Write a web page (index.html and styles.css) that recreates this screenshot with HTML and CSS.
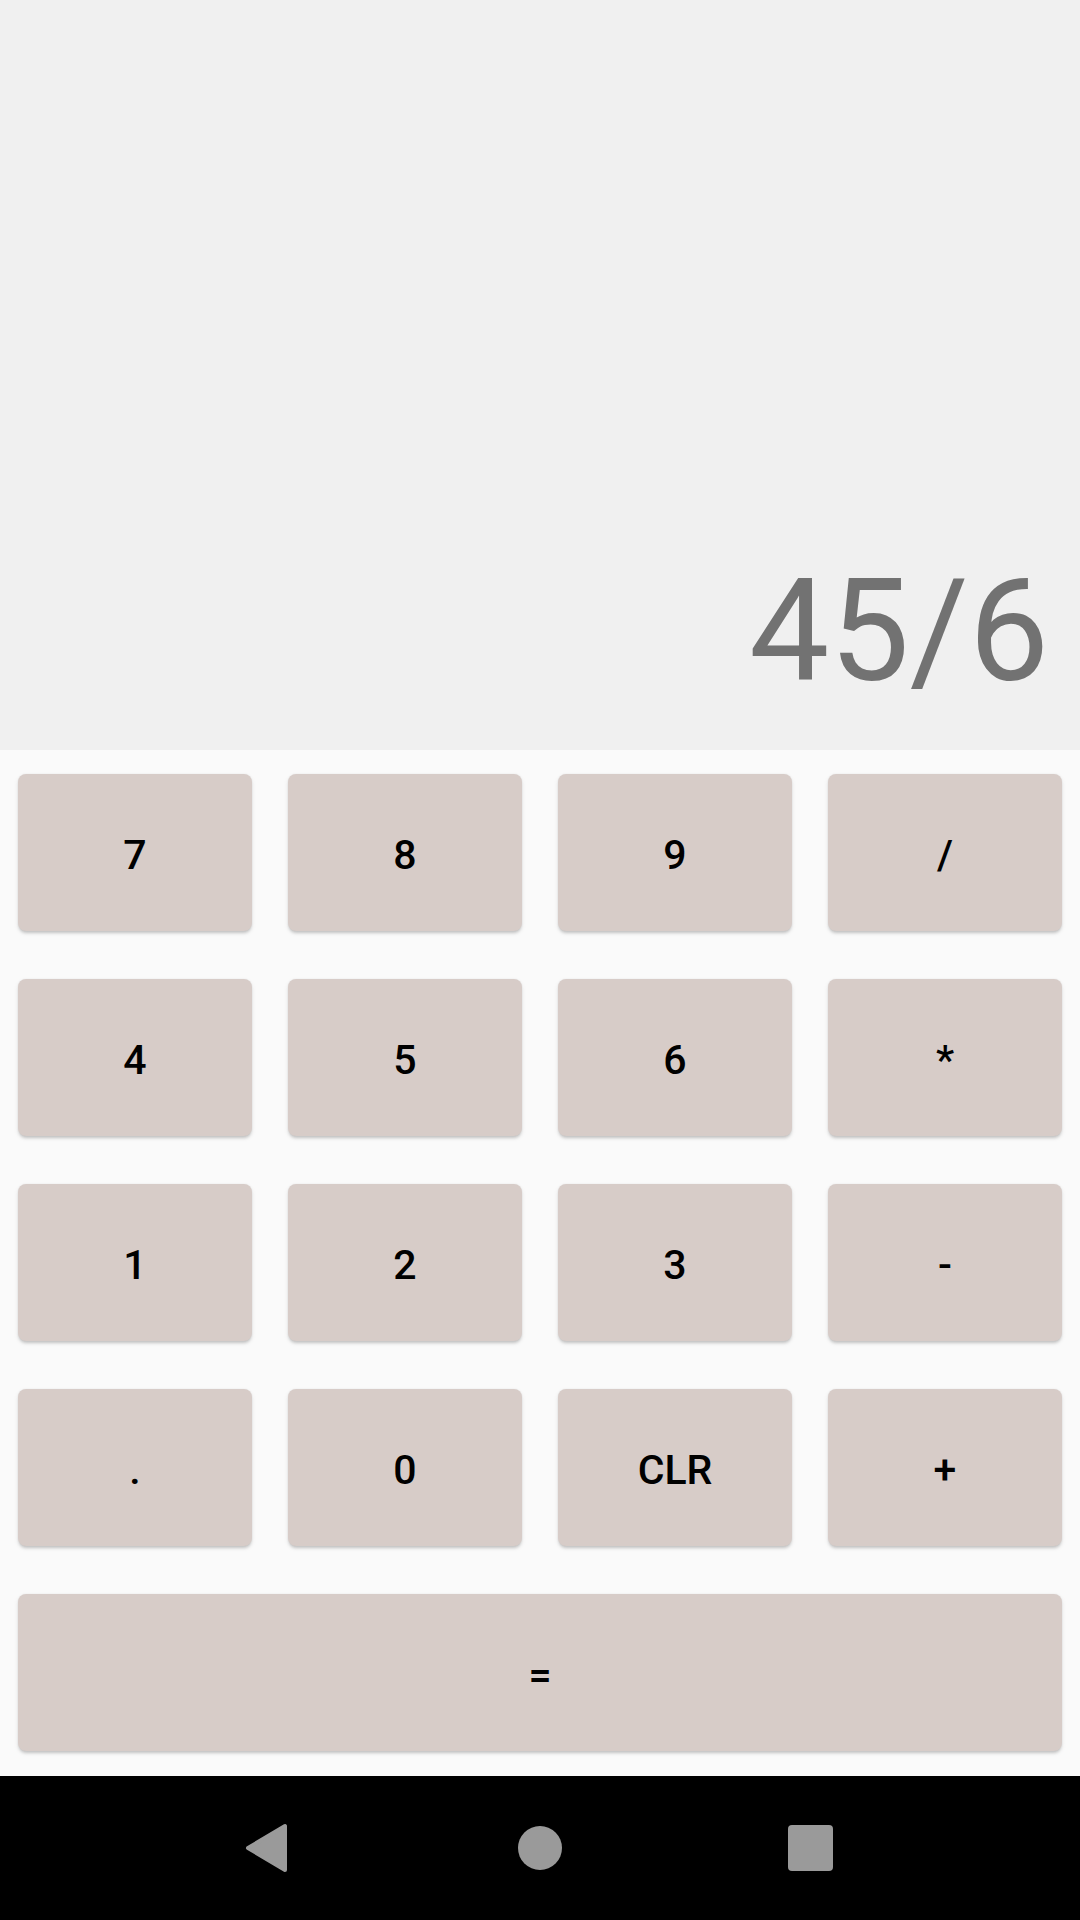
FILE: index.html
```html
<!DOCTYPE html>
<html>
<head>
<meta charset="utf-8">
<link rel="stylesheet" href="styles.css">
</head>
<body>
<div class="app">
  <div class="display"><span class="expr">45/6</span></div>
  <div class="keypad">
    <button class="key">7</button>
    <button class="key">8</button>
    <button class="key">9</button>
    <button class="key">/</button>
    <button class="key">4</button>
    <button class="key">5</button>
    <button class="key">6</button>
    <button class="key">*</button>
    <button class="key">1</button>
    <button class="key">2</button>
    <button class="key">3</button>
    <button class="key">-</button>
    <button class="key">.</button>
    <button class="key">0</button>
    <button class="key">CLR</button>
    <button class="key">+</button>
    <button class="key key-wide">=</button>
  </div>
  <div class="navbar">
    <div class="nav-slot">
      <svg class="nav-back" width="44" height="50" viewBox="0 0 44 50">
        <path d="M40 3 L40 47 L3 25 Z" fill="#9a9a9a" stroke="#9a9a9a" stroke-width="4" stroke-linejoin="round"/>
      </svg>
    </div>
    <div class="nav-slot"><div class="nav-home"></div></div>
    <div class="nav-slot"><div class="nav-recent"></div></div>
  </div>
</div>
</body>
</html>
```

FILE: styles.css
```css
html, body {
  margin: 0;
  padding: 0;
}
body {
  width: 1080px;
  height: 1920px;
  font-family: Roboto, "Noto Sans", "Liberation Sans", sans-serif;
  background: #fafafa;
}
.app {
  display: flex;
  flex-direction: column;
  height: 1920px;
}
.display {
  height: 750px;
  background: #f0f0f0;
  display: flex;
  justify-content: flex-end;
  align-items: flex-end;
  padding: 0 31px 47px 0;
  box-sizing: border-box;
}
.expr {
  font-size: 143px;
  line-height: 1;
  color: #727272;
  font-weight: 400;
}
.keypad {
  height: 1026px;
  box-sizing: border-box;
  padding: 24px 18px 0 18px;
  display: grid;
  grid-template-columns: repeat(4, 234px);
  grid-auto-rows: 157px;
  column-gap: 36px;
  row-gap: 48px;
  background: #fafafa;
}
.key {
  border: none;
  margin: 0;
  padding: 4px 0 0 0;
  background: #d7ccc8;
  border-radius: 8px;
  font-family: Roboto, "Noto Sans", "Liberation Sans", sans-serif;
  font-size: 41px;
  font-weight: 500;
  color: #000;
  box-shadow: 0 3px 3px -1px rgba(0,0,0,0.16), 0 2px 5px rgba(0,0,0,0.08), 0 0 2px rgba(0,0,0,0.06);
}
.key-wide {
  grid-column: 1 / span 4;
}
.navbar {
  height: 144px;
  background: #000;
  display: flex;
  justify-content: center;
  align-items: center;
}
.nav-slot {
  width: 272px;
  display: flex;
  justify-content: center;
  align-items: center;
}
.nav-back {
  display: block;
  margin-left: -2px;
}
.nav-home {
  width: 44px;
  height: 44px;
  border-radius: 50%;
  background: #9a9a9a;
}
.nav-recent {
  width: 45px;
  height: 46px;
  border-radius: 4px;
  background: #9a9a9a;
  margin-left: -4px;
}
```
